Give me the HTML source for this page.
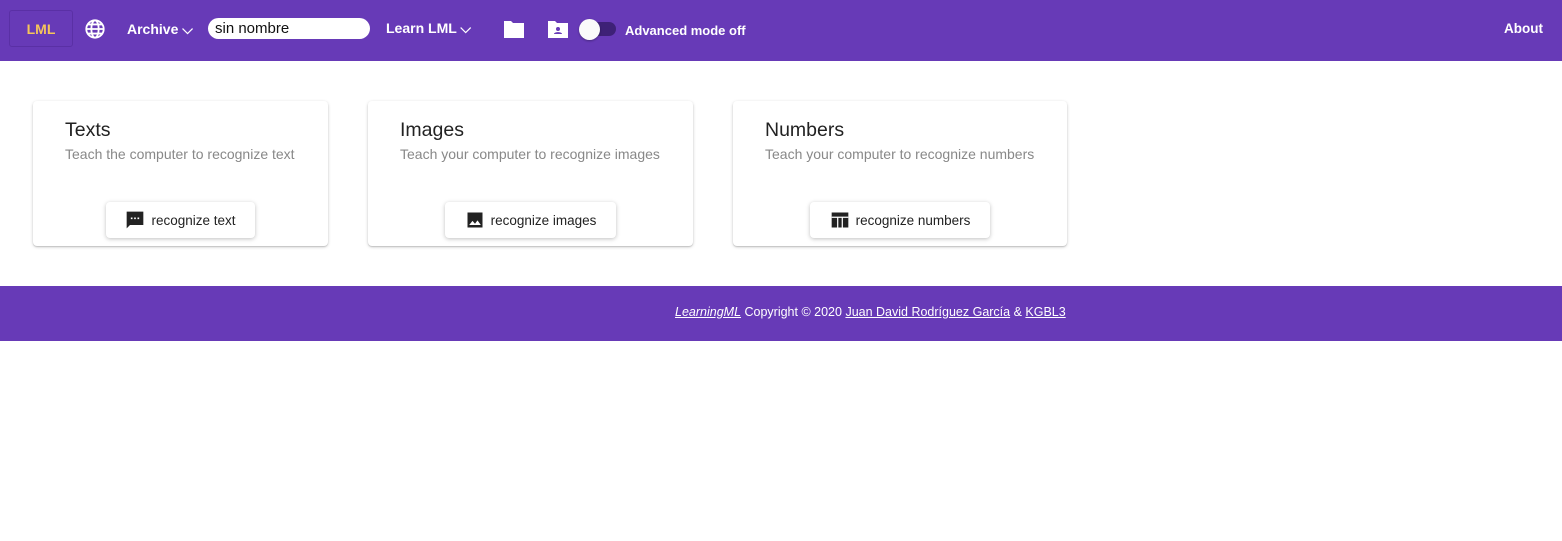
<!DOCTYPE html>
<html><head><style>
body{margin:0;width:1562px;height:541px;background:#fff;font-family:"Liberation Sans",sans-serif;position:relative;overflow:hidden}
.hdr{position:absolute;left:0;top:0;width:1562px;height:61px;background:#673ab7;color:#fff}
.hdr>*{position:absolute}
.b{font-weight:bold;font-size:14px}
.card{position:absolute;top:101px;height:145px;background:#fff;border-radius:4px;box-shadow:0 1px 3px rgba(0,0,0,.2),0 1px 1px rgba(0,0,0,.12)}
.card h2{position:absolute;left:32px;top:18px;margin:0;font-weight:normal;font-size:19.5px;color:#222}
.card p{position:absolute;left:32px;top:45px;margin:0;font-size:14px;color:#888}
.btn{position:absolute;top:101px;height:36px;background:#fff;border-radius:4px;box-shadow:0 1px 4px rgba(0,0,0,.25);font-size:13.5px;color:#222;display:flex;align-items:center;justify-content:center;gap:6px}
.ft{position:absolute;left:0;top:286px;width:1562px;height:55px;background:#673ab7;color:#fff;font-size:12.5px;line-height:52px}
.ft span{position:absolute;left:675px;white-space:nowrap}
.ft u{color:#fff}
</style></head><body>
<div class="hdr">
<div style="left:9px;top:10px;width:62px;height:35px;border:1px solid #5a30a5;border-radius:3px;color:#f6c55a;font-size:14px;font-weight:bold;text-align:center;line-height:36px">LML</div>
<svg style="left:84px;top:18px" width="22" height="22" viewBox="0 0 24 24" fill="none" stroke="#fff" stroke-width="2"><circle cx="12" cy="12" r="9.5"/><ellipse cx="12" cy="12" rx="4" ry="9.5"/><path d="M2.5 12h19M4 7h16M4 17h16"/></svg>
<div class="b" style="left:127px;top:21px">Archive ⌵</div>
<div style="left:208px;top:18px;width:162px;height:21px;background:#fff;border-radius:11px;color:#111;font-size:15px;line-height:21px;text-indent:7px">sin nombre</div>
<div class="b" style="left:386px;top:20px">Learn LML ⌵</div>
<svg style="left:503px;top:19px" width="22" height="20" viewBox="0 0 22 20"><path d="M1 2h7l2 2h11v15H1z" fill="#fff"/></svg>
<svg style="left:547px;top:19px" width="22" height="20" viewBox="0 0 22 20"><path d="M1 2h7l2 2h11v15H1z" fill="#fff"/><circle cx="11" cy="10" r="2" fill="#673ab7"/><path d="M7 15c0-2.5 8-2.5 8 0z" fill="#673ab7"/></svg>
<div style="left:582px;top:22px;width:34px;height:14px;border-radius:7px;background:#3e2177"></div>
<div style="left:579px;top:19px;width:21px;height:21px;border-radius:50%;background:#fafafa;box-shadow:0 1px 2px rgba(0,0,0,.3)"></div>
<div class="b" style="left:625px;top:23px;font-size:13px">Advanced mode off</div>
<div class="b" style="left:1504px;top:21px;font-size:13.5px">About</div>
</div>

<div class="card" style="left:33px;width:295px"><h2>Texts</h2><p>Teach the computer to recognize text</p>
<div class="btn" style="left:73px;width:149px"><svg width="20" height="20" viewBox="0 0 24 24"><path d="M2 2h20v16H6l-4 4z" fill="#222"/><path d="M7 9h2v2H7zM11 9h2v2h-2zM15 9h2v2h-2z" fill="#fff"/></svg>recognize text</div></div>
<div class="card" style="left:368px;width:325px"><h2>Images</h2><p>Teach your computer to recognize images</p>
<div class="btn" style="left:77px;width:171px"><svg width="20" height="20" viewBox="0 0 24 24"><path d="M3 3h18v18H3z" fill="#222"/><path d="M5 18l4-5 3 3.5 3-4 4 5.5z" fill="#fff"/></svg>recognize images</div></div>
<div class="card" style="left:733px;width:334px"><h2>Numbers</h2><p>Teach your computer to recognize numbers</p>
<div class="btn" style="left:77px;width:180px"><svg width="20" height="20" viewBox="0 0 24 24"><path d="M2 3h20v18H2z" fill="#222"/><path d="M2 8h20v1.5H2zM8.5 9h1.5v12H8.5zM14 9h1.5v12H14z" fill="#fff"/></svg>recognize numbers</div></div>

<div class="ft"><span><u><i>LearningML</i></u> Copyright © 2020 <u>Juan David Rodríguez García</u> &amp; <u>KGBL3</u></span></div>
</body></html>
